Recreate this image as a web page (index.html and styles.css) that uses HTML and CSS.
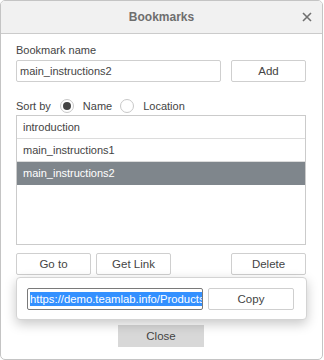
FILE: index.html
```html
<!DOCTYPE html>
<html>
<head>
<meta charset="utf-8">
<link rel="stylesheet" href="styles.css">
</head>
<body>
<div class="dialog">
  <div class="header">
    <span class="title">Bookmarks</span>
    <svg class="close-x" width="10" height="10" viewBox="0 0 10 10"><path d="M1 1L9 9M9 1L1 9" stroke="#707070" stroke-width="1.6" fill="none"/></svg>
  </div>
  <div class="body">
    <div class="label">Bookmark name</div>
    <div class="row-name">
      <div class="input name-input">main_instructions2</div>
      <div class="btn add">Add</div>
    </div>
    <div class="sort">
      <span class="sort-label">Sort by</span>
      <span class="radio checked"></span>
      <span class="radio-label">Name</span>
      <span class="radio"></span>
      <span class="radio-label">Location</span>
    </div>
    <div class="list">
      <div class="item">introduction</div>
      <div class="item">main_instructions1</div>
      <div class="item selected">main_instructions2</div>
    </div>
    <div class="actions">
      <div class="btn">Go to</div>
      <div class="btn">Get Link</div>
      <div class="spacer"></div>
      <div class="btn">Delete</div>
    </div>
    <div class="footer">
      <div class="btn close">Close</div>
    </div>
    <div class="popup">
      <div class="input link-input"><span class="sel">https://demo.teamlab.info/Products</span></div>
      <div class="btn copy">Copy</div>
    </div>
  </div>
</div>
</body>
</html>
```
FILE: styles.css
```css
* { box-sizing: border-box; }
html, body { margin: 0; padding: 0; background: #fff; }
body {
  font-family: "Liberation Sans", Arial, sans-serif;
  font-size: 11px;
  color: #444;
  width: 324px;
  height: 360px;
  overflow: hidden;
}
.dialog {
  width: 323px;
  height: 360px;
  border: 1px solid #c4c4c4;
  border-radius: 5px;
  overflow: hidden;
  background: #fff;
}
.header {
  position: relative;
  height: 33px;
  background: #f1f1f1;
  border-bottom: 1px solid #cbcbcb;
  display: flex;
  align-items: center;
  justify-content: center;
}
.title {
  font-weight: bold;
  font-size: 12px;
  color: #6e6e6e;
}
.close-x {
  position: absolute;
  right: 10px;
  top: 11px;
}
.body {
  position: relative;
  padding: 9px 16px 0 15px;
}
.label {
  height: 14px;
  line-height: 14px;
}
.row-name {
  display: flex;
  margin-top: 3px;
}
.input {
  height: 22px;
  border: 1px solid #cfcfcf;
  border-radius: 2px;
  line-height: 20px;
  padding-left: 3px;
  white-space: nowrap;
  overflow: hidden;
}
.name-input { width: 205px; }
.btn {
  height: 22px;
  border: 1px solid #cfcfcf;
  border-radius: 2px;
  background: #fff;
  width: 75px;
  text-align: center;
  line-height: 20px;
  font-size: 11.5px;
}
.add { margin-left: 10px; }
.sort {
  display: flex;
  align-items: center;
  height: 19px;
  margin-top: 14px;
}
.sort-label { margin-right: 9px; }
.radio {
  width: 14px;
  height: 14px;
  border: 1px solid #c8c8c8;
  border-radius: 50%;
  display: flex;
  align-items: center;
  justify-content: center;
  margin-right: 9px;
}
.radio.checked::after {
  content: "";
  width: 8px;
  height: 8px;
  border-radius: 50%;
  background: #444;
}
.radio-label { margin-right: 8px; }
.list {
  width: 290px;
  height: 130px;
  border: 1px solid #cbcbcb;
}
.item {
  height: 23px;
  line-height: 22px;
  padding-left: 6px;
  border-bottom: 1px solid #dcdcdc;
}
.item.selected {
  background: #7f868c;
  color: #fff;
  border-bottom: none;
}
.actions {
  display: flex;
  gap: 5px;
  margin-top: 8px;
  width: 290px;
}
.spacer { flex: 1; }
.footer {
  display: flex;
  justify-content: center;
  margin-top: 50px;
}
.close {
  width: 86px;
  height: 22px;
  border: none;
  background: #d8d8d8;
  line-height: 22px;
  border-radius: 0;
}
.popup {
  position: absolute;
  left: 15px;
  top: 243px;
  width: 291px;
  height: 43px;
  border: 1px solid #d4d4d4;
  border-radius: 4px;
  background: #fff;
  box-shadow: 0 4px 12px rgba(0,0,0,0.22);
  display: flex;
  gap: 5px;
  padding: 10px 0 0 10px;
}
.link-input {
  width: 176px;
  border-color: #7a7a7a;
  padding-left: 2px;
  line-height: 20px;
  font-size: 11.3px;
}
.sel {
  background: #3390ff;
  color: #fff;
  padding: 1px 0;
}
.copy { width: 86px; }
```
